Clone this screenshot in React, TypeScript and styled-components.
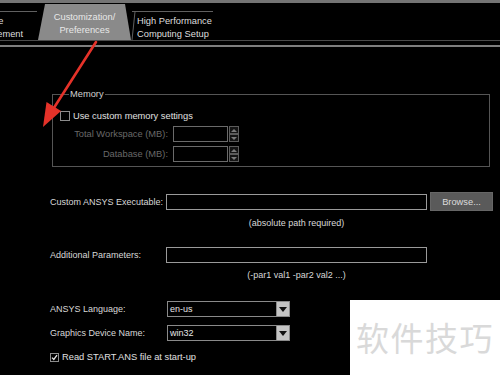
import React from 'react';
import styled, { createGlobalStyle } from 'styled-components';

const Global = createGlobalStyle`
  html, body { margin: 0; padding: 0; background: #000; }
  body { font-family: "Liberation Sans", Arial, sans-serif; }
  * { box-sizing: border-box; }
`;

const Screen = styled.div`
  position: relative;
  width: 500px;
  height: 375px;
  overflow: hidden;
  background: #000;
  color: #d8d8d8;
  font-size: 9px;
  line-height: 12px;
`;

const TopRule = styled.div`
  height: 3px;
  background: #747474;
`;

const TabStrip = styled.div`
  display: flex;
  align-items: flex-end;
  height: 37px;
`;

const Tab = styled.div<{ $active?: boolean; $slant?: boolean; $width: number; $offset?: number; $align?: string }>`
  position: relative;
  flex: none;
  width: ${p => p.$width}px;
  margin-left: ${p => p.$offset ?? 0}px;
  height: ${p => (p.$active ? 36 : 29)}px;
  padding-top: ${p => (p.$active ? 7 : 3)}px;
  padding-left: ${p => (p.$align === 'left' ? 5 : 0)}px;
  text-align: ${p => p.$align ?? 'center'};
  font-size: 9.3px;
  line-height: 13px;
  color: ${p => (p.$active ? '#e8e8e8' : '#dedede')};
  background: ${p => (p.$active ? '#8a8a8a' : 'transparent')};
  border-top: ${p => (p.$active ? 'none' : '1px solid #606060')};
  clip-path: ${p => (p.$active ? 'polygon(7px 0, calc(100% - 6px) 0, 100% 100%, 0 100%)' : 'none')};
  white-space: nowrap;

  &::before {
    content: '';
    display: ${p => (p.$slant ? 'block' : 'none')};
    position: absolute;
    left: 1px;
    top: 0;
    bottom: 0;
    width: 1px;
    background: #606060;
    transform: skewX(-6deg);
  }
`;

const TabBase = styled.div`
  height: 1px;
  background: #4a4a4a;
`;

const Divider = styled.div`
  height: 2px;
  margin-top: 4px;
  background: #7e7e7e;
`;

const Content = styled.div`
  display: flex;
  flex-direction: column;
  padding-left: 50px;
`;

const Group = styled.fieldset`
  margin: 41px 0 0 2px;
  width: 438px;
  border: 1px solid #555;
  padding: 10px 0 4px 7px;
  min-width: 0;
`;

const Legend = styled.legend`
  margin-left: 9px;
  padding: 0 1px;
  color: #d0d0d0;
  font-size: 9.3px;
  line-height: 12px;
`;

const CheckRow = styled.div`
  display: flex;
  align-items: center;
  gap: 3px;
  height: 12px;
  color: #e0e0e0;
  font-size: 9.3px;
`;

const Box = styled.span<{ $size: number }>`
  display: inline-flex;
  align-items: center;
  justify-content: center;
  flex: none;
  width: ${p => p.$size}px;
  height: ${p => p.$size}px;
  border: 1px solid #8c8c8c;
  background: #000;
`;

const MemRow = styled.div`
  display: flex;
  align-items: center;
  height: 16px;
  margin-top: ${(p: { $gap: number }) => p.$gap}px;
`;

const DimLabel = styled.span`
  width: 108px;
  margin-right: 5px;
  text-align: right;
  color: #696969;
  font-size: 9.3px;
`;

const SmallInput = styled.div`
  width: 55px;
  height: 16px;
  border: 1px solid #6a6a6a;
  background: #000;
`;

const Spinner = styled.div`
  display: flex;
  flex-direction: column;
  width: 10px;
  height: 16px;
  margin-left: 1px;
`;

const SpinHalf = styled.div<{ $down?: boolean }>`
  flex: 1;
  display: flex;
  align-items: center;
  justify-content: center;
  border: 1px solid #5c5c5c;
  background: #141414;
  &::after {
    content: '';
    border-left: 3px solid transparent;
    border-right: 3px solid transparent;
    ${p => (p.$down ? 'border-top: 3px solid #7a7a7a;' : 'border-bottom: 3px solid #7a7a7a;')}
  }
`;

const FieldRow = styled.div<{ $gap: number; $height: number }>`
  display: flex;
  align-items: center;
  height: ${p => p.$height}px;
  margin-top: ${p => p.$gap}px;
`;

const Label = styled.span<{ $width: number }>`
  flex: none;
  width: ${p => p.$width}px;
  color: #d8d8d8;
  font-size: 9px;
  white-space: nowrap;
`;

const TextInput = styled.div`
  width: 261px;
  height: 16px;
  border: 1px solid #9a9a9a;
  background: #000;
`;

const Button = styled.div`
  width: 63px;
  height: 19px;
  margin-left: 3px;
  display: flex;
  align-items: center;
  justify-content: center;
  background: #5a5a5a;
  border: 1px solid #666;
  color: #dcdcdc;
  font-size: 9.3px;
`;

const Hint = styled.div<{ $gap: number }>`
  width: 261px;
  margin-left: 116px;
  margin-top: ${p => p.$gap}px;
  text-align: center;
  color: #d8d8d8;
  font-size: 9px;
  line-height: 12px;
`;

const Select = styled.div`
  display: flex;
  width: 123px;
  height: 16px;
  border: 1px solid #8a8a8a;
  background: #000;
`;

const SelectValue = styled.span`
  flex: 1;
  padding-left: 2px;
  color: #e6e6e6;
  font-size: 9px;
  line-height: 14px;
`;

const DropButton = styled.span`
  width: 13px;
  display: flex;
  align-items: center;
  justify-content: center;
  background: #c4c4c4;
  border-left: 1px solid #8a8a8a;
  &::after {
    content: '';
    border-left: 4px solid transparent;
    border-right: 4px solid transparent;
    border-top: 5px solid #111;
  }
`;

const Watermark = styled.div`
  position: absolute;
  right: 0;
  bottom: 0;
  width: 150px;
  height: 75px;
  background: #fff;
  display: flex;
  align-items: center;
  justify-content: center;
  color: #d9d9d9;
  font-family: "Noto Sans CJK SC", sans-serif;
  font-size: 33px;
  line-height: 1;
  letter-spacing: 1.5px;
`;

const ArrowLayer = styled.svg`
  position: absolute;
  left: 0;
  top: 0;
  pointer-events: none;
`;

export default function App() {
  return (
    <>
      <Global />
      <Screen>
        <TopRule />
        <TabStrip>
          <Tab $width={82} $offset={-45}>
            File
            <br />
            Management
          </Tab>
          <Tab $active $width={93} $offset={1}>
            Customization/
            <br />
            Preferences
          </Tab>
          <Tab $slant $width={81} $offset={1} $align="left">
            High Performance
            <br />
            Computing Setup
          </Tab>
        </TabStrip>
        <TabBase />
        <Divider />
        <Content>
          <Group>
            <Legend>Memory</Legend>
            <CheckRow>
              <Box $size={10} />
              Use custom memory settings
            </CheckRow>
            <MemRow $gap={4}>
              <DimLabel>Total Workspace (MB):</DimLabel>
              <SmallInput />
              <Spinner>
                <SpinHalf />
                <SpinHalf $down />
              </Spinner>
            </MemRow>
            <MemRow $gap={4}>
              <DimLabel>Database (MB):</DimLabel>
              <SmallInput />
              <Spinner>
                <SpinHalf />
                <SpinHalf $down />
              </Spinner>
            </MemRow>
          </Group>

          <FieldRow $gap={25} $height={19}>
            <Label $width={116}>Custom ANSYS Executable:</Label>
            <TextInput />
            <Button>Browse...</Button>
          </FieldRow>
          <Hint $gap={6}>(absolute path required)</Hint>

          <FieldRow $gap={18} $height={16}>
            <Label $width={116}>Additional Parameters:</Label>
            <TextInput />
          </FieldRow>
          <Hint $gap={6}>(-par1 val1 -par2 val2 ...)</Hint>

          <FieldRow $gap={20} $height={16}>
            <Label $width={117}>ANSYS Language:</Label>
            <Select>
              <SelectValue>en-us</SelectValue>
              <DropButton />
            </Select>
          </FieldRow>
          <FieldRow $gap={8} $height={16}>
            <Label $width={117}>Graphics Device Name:</Label>
            <Select>
              <SelectValue>win32</SelectValue>
              <DropButton />
            </Select>
          </FieldRow>
          <FieldRow $gap={10} $height={12}>
            <CheckRow>
              <Box $size={9}>
                <svg width="7" height="7" viewBox="0 0 7 7">
                  <path d="M1 3.6 L2.8 5.4 L6 1.2" stroke="#e8e8e8" strokeWidth="1.3" fill="none" />
                </svg>
              </Box>
              Read START.ANS file at start-up
            </CheckRow>
          </FieldRow>
        </Content>

        <ArrowLayer width="500" height="375" viewBox="0 0 500 375">
          <line x1="96" y1="42" x2="50" y2="114" stroke="#e53229" strokeWidth="2.6" strokeLinecap="round" />
          <polygon points="43,127 46.5,102 61,111" fill="#e53229" />
        </ArrowLayer>

        <Watermark>软件技巧</Watermark>
      </Screen>
    </>
  );
}
